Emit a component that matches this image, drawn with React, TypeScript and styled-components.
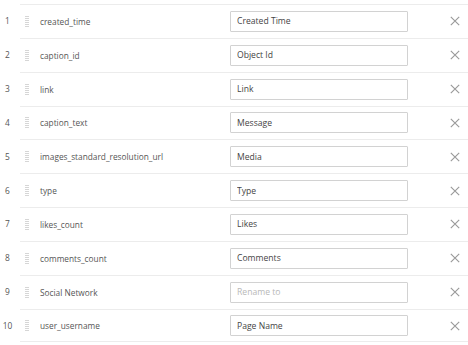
import styled, { createGlobalStyle } from 'styled-components'

const GlobalStyle = createGlobalStyle`
  html, body {
    margin: 0;
    padding: 0;
    background: #fff;
  }
  body {
    font-family: 'Open Sans', 'Liberation Sans', sans-serif;
  }
`

const List = styled.div`
  display: flex;
  flex-direction: column;
  padding-top: 4px;
`

const Row = styled.div`
  display: flex;
  align-items: stretch;
  height: 33.85px;
`

const Index = styled.span`
  flex: 0 0 20px;
  display: flex;
  align-items: center;
  justify-content: center;
  padding-right: 5px;
  box-sizing: border-box;
  font-size: 8.4px;
  color: #555;
`

const Body = styled.div<{ $last?: boolean }>`
  flex: 1;
  display: grid;
  grid-template-columns: 20px 190px 178px 1fr;
  align-items: center;
  border-top: 1px solid #ececec;
  border-bottom: ${({ $last }) => ($last ? '1px solid #ececec' : 'none')};
`

const Handle = styled.span`
  display: flex;
  align-items: center;
  padding-left: 5px;
`

const Field = styled.span`
  font-size: 8.3px;
  color: #555;
  white-space: nowrap;
`

const Input = styled.input`
  box-sizing: border-box;
  width: 178px;
  height: 21px;
  border: 1px solid #d2d2d2;
  border-radius: 1px;
  padding: 0 6px;
  font-family: 'Open Sans', 'Liberation Sans', sans-serif;
  font-size: 8.6px;
  color: #444;
  outline: none;
  &::placeholder {
    color: #b8b8b8;
  }
`

const Remove = styled.button`
  justify-self: end;
  margin-right: 8px;
  border: none;
  background: none;
  padding: 0;
  display: flex;
  cursor: pointer;
`

const GripIcon = () => (
  <svg width="4" height="11" viewBox="0 0 4 11">
    {[0, 2, 4, 6, 8, 10].map((y) => (
      <rect key={y} x="0" y={y} width="4" height="1" fill="#d6d6d6" />
    ))}
  </svg>
)

const CloseIcon = () => (
  <svg width="10" height="10" viewBox="0 0 10 10">
    <path d="M0.8 0.8L9.2 9.2M9.2 0.8L0.8 9.2" stroke="#9a9a9a" strokeWidth="1.15" />
  </svg>
)

const rows = [
  { field: 'created_time', name: 'Created Time' },
  { field: 'caption_id', name: 'Object Id' },
  { field: 'link', name: 'Link' },
  { field: 'caption_text', name: 'Message' },
  { field: 'images_standard_resolution_url', name: 'Media' },
  { field: 'type', name: 'Type' },
  { field: 'likes_count', name: 'Likes' },
  { field: 'comments_count', name: 'Comments' },
  { field: 'Social Network', name: '' },
  { field: 'user_username', name: 'Page Name' },
]

const App = () => {
  return (
    <>
      <GlobalStyle />
      <List>
        {rows.map((r, i) => (
          <Row key={r.field}>
            <Index>{i + 1}</Index>
            <Body $last={i === rows.length - 1}>
              <Handle>
                <GripIcon />
              </Handle>
              <Field>{r.field}</Field>
              <Input defaultValue={r.name} placeholder="Rename to" />
              <Remove>
                <CloseIcon />
              </Remove>
            </Body>
          </Row>
        ))}
      </List>
    </>
  )
}

export default App
